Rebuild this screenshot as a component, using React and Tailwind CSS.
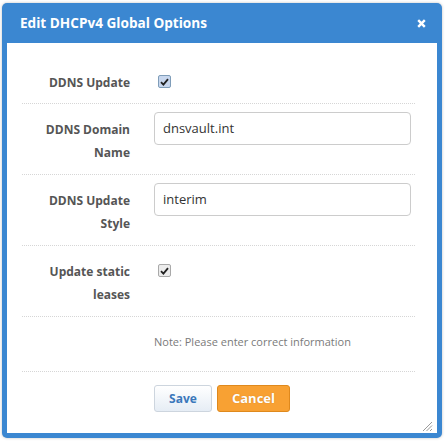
const FONT = { fontFamily: '"Open Sans", "Noto Sans", sans-serif' };

function Check({ focused }) {
  return (
    <span
      className={`mt-[1px] ml-[4px] flex h-[13px] w-[13px] items-center justify-center rounded-[2px] border ${
        focused ? 'border-[#7f9db9] bg-[#c8d7ee]' : 'border-[#a9a9a9] bg-[#ececec]'
      }`}
    >
      <svg width="9" height="8" viewBox="0 0 9 8">
        <path d="M1 4.2 L3.4 6.6 L8 1.2" fill="none" stroke="#222" strokeWidth="1.8" />
      </svg>
    </span>
  );
}

function Row({ label, children, first }) {
  return (
    <div
      className={`flex border-b border-dotted border-[#d6d6d6] ${first ? 'pt-[28px] pb-[9px]' : 'pt-[8px] pb-[10px]'}`}
    >
      <div
        className={`w-[108px] shrink-0 text-right text-[12px] font-bold leading-[23px] text-[#555] ${first ? '' : 'pt-[6px]'}`}
      >
        {label}
      </div>
      <div className="ml-[24px] flex-1">{children}</div>
    </div>
  );
}

function Field({ value }) {
  return (
    <div className="flex h-[33px] w-[257px] items-center rounded-[4px] border border-[#cccccc] bg-white px-[8px] text-[13px] text-[#333]">
      {value}
    </div>
  );
}

export default function App() {
  return (
    <div className="h-[442px] w-[446px] bg-white pt-[3px] pl-[2px]" style={FONT}>
      <div className="relative flex h-[435px] w-[440px] flex-col rounded-[5px] bg-[#3b87d1] px-[5px] pb-[5px] shadow-[0_0_3px_rgba(0,0,0,0.25)]">
        {/* Title bar */}
        <div className="flex h-[40px] shrink-0 items-center justify-between pl-[13px] pr-[11px]">
          <span className="text-[13.6px] font-bold text-white">Edit DHCPv4 Global Options</span>
          <svg width="9" height="9" viewBox="0 0 9 9">
            <path d="M1.2 1.2 L7.8 7.8 M7.8 1.2 L1.2 7.8" stroke="#fff" strokeWidth="2.4" />
          </svg>
        </div>

        {/* Body */}
        <div className="relative flex-1 bg-white pl-[15px] pr-[22px]">
          <Row label="DDNS Update" first>
            <div className="pt-[3px]">
              <Check focused />
            </div>
          </Row>
          <Row label={<>DDNS Domain<br />Name</>}>
            <Field value="dnsvault.int" />
          </Row>
          <Row label={<>DDNS Update<br />Style</>}>
            <Field value="interim" />
          </Row>
          <Row label={<>Update static<br />leases</>}>
            <div className="pt-[9px]">
              <Check />
            </div>
          </Row>
          <div className="flex border-b border-dotted border-[#d6d6d6] pt-[17px] pb-[21px]">
            <div className="w-[108px] shrink-0" />
            <div className="ml-[24px] text-[11px] leading-[16px] text-[#7a7a7a]">
              Note: Please enter correct information
            </div>
          </div>
          <div className="flex gap-[5px] pt-[13px] pl-[132px]">
            <button className="h-[27px] w-[58px] rounded-[3px] border border-[#cdd5de] bg-gradient-to-b from-white to-[#e6edf5] text-[12px] font-bold text-[#3b78bb]">
              Save
            </button>
            <button className="h-[27px] w-[73px] rounded-[3px] border border-[#df891d] bg-[#f8a133] text-[13px] font-bold text-white [text-shadow:0_0_1px_rgba(160,90,0,0.5)]">
              Cancel
            </button>
          </div>

          {/* resize grip */}
          <svg className="absolute right-[4px] bottom-[1px]" width="11" height="11" viewBox="0 0 11 11">
            <path d="M10 1 L1 10 M10 4.5 L4.5 10 M10 8 L8 10" stroke="#9a9a9a" strokeWidth="1" />
          </svg>
        </div>
      </div>
    </div>
  );
}
